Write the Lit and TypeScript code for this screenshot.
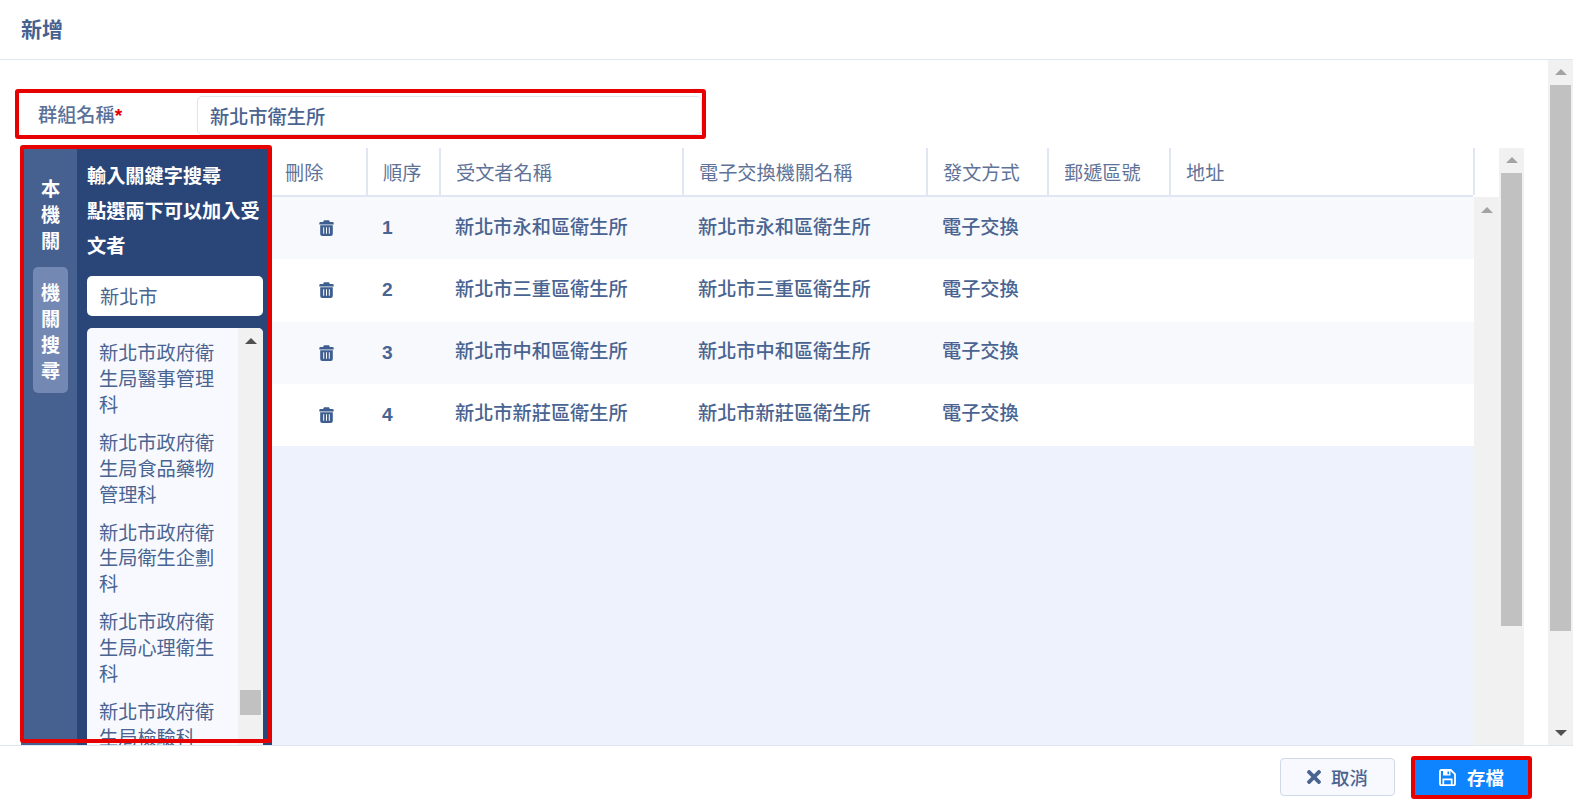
import { LitElement, html, css, svg } from "lit";
import { customElement } from "lit/decorators.js";

const TRASH = svg`<path fill-rule="evenodd" d="M5 .3h5l.9 1.7h2.6a1.2 1.2 0 0 1 1.2 1.2V4.4H.3V3.2A1.2 1.2 0 0 1 1.500 2h2.600zM1.200 5.300h12.600v8.600a2.100 2.100 0 0 1-2.100 2.100H3.300a2.100 2.100 0 0 1-2.100-2.100zM4.200 7.300v6.500h1v-6.500zM7 7.300v6.500h1v-6.500zM9.800 7.300v6.500h1v-6.500z"/>`;
const TIMES = svg`<path d="M242.72 256l100.07-100.07c12.28-12.28 12.28-32.19 0-44.48l-22.24-22.24c-12.28-12.28-32.19-12.28-44.48 0L176 189.28 75.93 89.21c-12.28-12.28-32.19-12.28-44.48 0L9.21 111.45c-12.28 12.28-12.28 32.19 0 44.48L109.28 256 9.21 356.07c-12.28 12.28-12.28 32.19 0 44.48l22.24 22.24c12.28 12.28 32.2 12.28 44.48 0L176 322.72l100.07 100.07c12.28 12.28 32.2 12.28 44.48 0l22.24-22.24c12.28-12.28 12.28-32.19 0-44.48L242.72 256z"/>`;
const SAVE = svg`<path fill="none" stroke="#fff" stroke-width="1.8" d="M2.200 1H11.800L16 5.200V15a1.200 1.200 0 0 1-1.200 1.200H2.200A1.200 1.200 0 0 1 1 15V2.200A1.200 1.200 0 0 1 2.200 1z"/><path fill="#fff" fill-rule="evenodd" d="M4 1h7.500v5.600H4zM8.500 2.400v2.800h1.500V2.400z"/><path fill="none" stroke="#fff" stroke-width="1.700" d="M4.300 16V10.300h8.400V16"/>`;

const ROWS = ["永和", "三重", "中和", "新莊"];
const ORGS = ["醫事管理科", "食品藥物管理科", "衛生企劃科", "心理衛生科", "檢驗科"];

@customElement("app-root")
export class AppRoot extends LitElement {
  static styles = css`
    :host { display: flex; flex-direction: column; width: 1573px; height: 805px; overflow: hidden; background: #fff; color: #4a6491;
      font-family: "Liberation Sans", "Noto Sans CJK TC", sans-serif; font-size: 19.2px; }
    * { box-sizing: border-box; }
    .head { height: 60px; flex: none; border-bottom: 1px solid #dfe6ef; padding: 0 21px 3px; display: flex; align-items: center; font-weight: 700; font-size: 21px; color: #46608f; }
    .mid { flex: 1; min-height: 0; display: flex; }
    .content { flex: 1; min-width: 0; display: flex; flex-direction: column; padding: 29px 24px 0 15px; }
    .group { width: 691px; height: 50px; flex: none; border: 4px solid #e60000; border-radius: 3px; display: flex; align-items: center; padding-left: 19px; }
    .group label { width: 159px; flex: none; color: #5a7099; font-weight: 500; margin-top: -1px; }
    .group label b { color: #e60000; }
    .group .field { flex: 1; height: 39px; margin-top: 3px; border: 1px solid #dfe6ef; border-radius: 5px; padding: 0 12px; display: flex; align-items: center; font-weight: 500; }
    .work { flex: 1; min-height: 0; display: flex; }
    .side { width: 251px; margin-left: 6px; flex: none; position: relative; background: #2a4678; display: flex; margin-top: 9px; }
    .side::after { content: ""; position: absolute; left: -1px; top: -3px; right: 0; bottom: 2px; border: 4px solid #e60000; border-radius: 3px; pointer-events: none; }
    .tabs { width: 56px; flex: none; background: #46608f; padding: 29px 12px 0; color: #fff; font-weight: 700; text-align: center; line-height: 25.92px; }
    .tab { margin: 0 0 12px; width: 35px; }
    .tab span { display: block; width: 20px; margin: 0 auto; }
    .tab.on { background: #7388b3; border-radius: 5px; padding: 14px 0 9px; }
    .panel { flex: 1; min-width: 0; padding: 11px 9px 0 10px; display: flex; flex-direction: column; }
    .hint { color: #fff; font-weight: 700; line-height: 35px; }
    .search { height: 40px; flex: none; margin-top: 12px; background: #fff; border-radius: 5px; padding: 0 13px; display: flex; align-items: center; }
    .list { flex: 1; min-height: 0; margin-top: 12px; background: #f7f9fe; border-radius: 5px 5px 0 0; display: flex; overflow: hidden; }
    .items { flex: 1; padding: 13px 12px 0; line-height: 25.92px; overflow: hidden; }
    .item { margin-bottom: 12px; }
    .bar { width: 25px; flex: none; background: #f1f1f1; position: relative; }
    .bar .thumb { position: absolute; left: 2px; right: 2px; background: #c1c1c1; }
    .arr { position: absolute; left: 7px; width: 0; height: 0; border-left: 6px solid transparent; border-right: 6px solid transparent; }
    .arr.up { top: 9px; border-bottom: 6px solid #a3a3a3; }
    .arr.up.low { top: 10px; }
    .arr.dn { bottom: 9px; border-top: 6px solid #505050; }
    .arr.dark { border-bottom-color: #505050; }
    .tablewrap { flex: 1; min-width: 0; display: flex; flex-direction: column; margin-top: 9px; }
    .thead, .row { display: grid; grid-template-columns: 96px 73px 243px 244px 121px 122px 304px; }
    .thead { height: 49px; flex: none; border-bottom: 2px solid #e0e6f2; margin-right: 26px; color: #5f7398; }
    .thead div { border-right: 2px solid #e0e6f2; padding: 1px 0 0 15px; display: flex; align-items: center; }
    .thead div:first-child { padding-left: 13px; }
    .tbody { flex: 1; min-height: 0; display: flex; }
    .rows { flex: 1; min-width: 0; background: #edf2fc; }
    .row { height: 62.25px; align-items: center; background: #fff; font-weight: 500; }
    .row:nth-child(odd) { background: #f7f9fd; }
    .row > div { padding: 0 0 5px 14px; }
    .row .del { display: flex; justify-content: center; padding: 0 0 0 12px; }
    .row svg { width: 15px; height: 16px; fill: #3f5e90; }
    .row .num { font-weight: 700; padding: 0 0 0 14px; }
    .outer { width: 25px; flex: none; margin-top: 9px; }
    .mainbar { width: 25px; flex: none; }
    .foot { height: 60px; flex: none; border-top: 1px solid #dfe6ef; display: flex; align-items: center; justify-content: flex-end; gap: 16px; padding: 3px 41px 0 0; }
    button { font: inherit; font-size: 18.4px; font-weight: 500; display: flex; align-items: center; justify-content: center; border-radius: 4px; }
    .cancel { width: 115px; height: 38px; gap: 10px; background: #f7f9fe; border: 1px solid #cfd9e8; color: #4a6491; }
    .cancel svg { width: 14px; height: 14px; fill: currentColor; }
    .save { width: 121px; height: 43px; gap: 11px; background: #0e84ff; border: 4px solid #e60000; color: #fff; border-radius: 3px; font-weight: 700; }
    .save svg { width: 17px; height: 17px; }
  `;

  render() {
    return html`
      <div class="head">新增</div>
      <div class="mid">
        <div class="content">
          <div class="group">
            <label>群組名稱<b>*</b></label>
            <div class="field">新北市衛生所</div>
          </div>
          <div class="work">
            <div class="side">
              <div class="tabs">
                <div class="tab"><span>本機關</span></div>
                <div class="tab on"><span>機關搜尋</span></div>
              </div>
              <div class="panel">
                <div class="hint">輸入關鍵字搜尋<br />點選兩下可以加入受文者</div>
                <div class="search">新北市</div>
                <div class="list">
                  <div class="items">
                    ${ORGS.map((o) => html`<div class="item">新北市政府衛生局${o}</div>`)}
                  </div>
                  <div class="bar">
                    <div class="arr up dark low"></div>
                    <div class="thumb" style="top:362px;height:25px"></div>
                  </div>
                </div>
              </div>
            </div>
            <div class="tablewrap">
              <div class="thead">
                <div>刪除</div><div>順序</div><div>受文者名稱</div><div>電子交換機關名稱</div><div>發文方式</div><div>郵遞區號</div><div>地址</div>
              </div>
              <div class="tbody">
                <div class="rows">
                  ${ROWS.map(
                    (r, i) => html`<div class="row">
                      <div class="del"><svg viewBox="0 0 15 16">${TRASH}</svg></div>
                      <div class="num">${i + 1}</div>
                      <div>新北市${r}區衛生所</div>
                      <div>新北市${r}區衛生所</div>
                      <div>電子交換</div>
                    </div>`
                  )}
                </div>
                <div class="bar"><div class="arr up low"></div></div>
              </div>
            </div>
            <div class="bar outer">
              <div class="arr up"></div>
              <div class="thumb" style="top:25px;height:453px"></div>
            </div>
          </div>
        </div>
        <div class="bar mainbar">
          <div class="arr up"></div>
          <div class="arr dn"></div>
          <div class="thumb" style="top:25px;height:546px"></div>
        </div>
      </div>
      <div class="foot">
        <button class="cancel"><svg viewBox="0 80 352 352">${TIMES}</svg>取消</button>
        <button class="save"><svg viewBox="0 0 17 17">${SAVE}</svg>存檔</button>
      </div>
    `;
  }
}
